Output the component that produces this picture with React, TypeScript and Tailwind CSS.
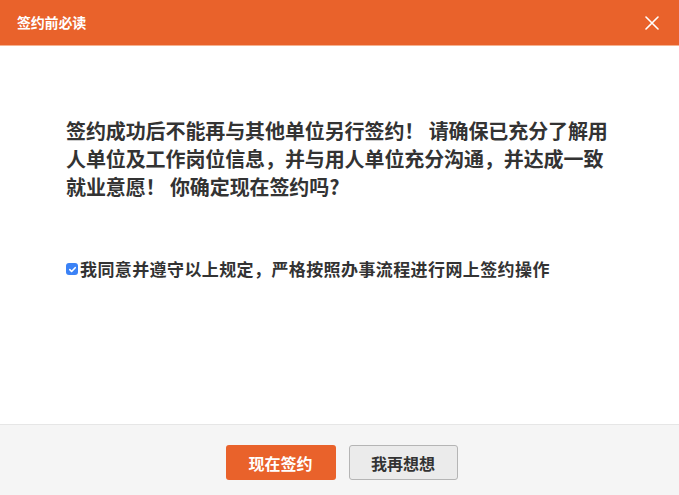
import { useState } from "react";

export default function App() {
  const [agreed, setAgreed] = useState(true);

  return (
    <div
      className="w-[679px] h-[495px] flex flex-col bg-white overflow-hidden"
      style={{ fontFamily: '"Noto Sans CJK SC", "Noto Sans", sans-serif' }}
    >
      {/* header */}
      <div className="h-[46px] shrink-0 bg-[#e9622b] border-b border-[#f5b290] flex items-center justify-between pl-[17px] pr-[16px]">
        <span className="text-white text-[14px] font-bold tracking-[-0.2px]">签约前必读</span>
        <button className="w-[22px] h-[22px] flex items-center justify-center">
          <svg width="14" height="14" viewBox="0 0 14 14" fill="none" stroke="#fff" strokeWidth="1.6" strokeLinecap="round">
            <path d="M1 1l12 12M13 1L1 13" />
          </svg>
        </button>
      </div>

      {/* body */}
      <div className="flex-1 pt-[71px] pl-[66px] pr-[50px]">
        <p className="w-[556px] text-[20px] leading-[28px] font-bold text-[#333] tracking-[-0.1px]">
          签约成功后不能再与其他单位另行签约！ 请确保已充分了解用人单位及工作岗位信息，并与用人单位充分沟通，并达成一致就业意愿！ 你确定现在签约吗?
        </p>
        <label className="mt-[57px] flex items-center text-[17px] leading-[22px] font-bold text-[#333] tracking-[0.4px]">
          <span
            onClick={() => setAgreed(!agreed)}
            className={`w-[12px] h-[12px] mr-[2px] rounded-[3px] flex items-center justify-center ${agreed ? "bg-[#3b82f6]" : "bg-white border border-gray-400"}`}
          >
            {agreed && (
              <svg width="9" height="9" viewBox="0 0 10 10" fill="none" stroke="#fff" strokeWidth="1.8" strokeLinecap="round" strokeLinejoin="round">
                <path d="M2 5.2l2 2L8 3" />
              </svg>
            )}
          </span>
          我同意并遵守以上规定，严格按照办事流程进行网上签约操作
        </label>
      </div>

      {/* footer */}
      <div className="h-[71px] shrink-0 bg-[#f5f5f5] border-t border-[#e6e6e6] flex justify-center gap-[13px] pt-[20px] pl-[4px]">
        <button className="w-[110px] h-[35px] rounded-[3px] bg-[#e9622b] text-white text-[16px] font-bold">
          现在签约
        </button>
        <button className="w-[109px] h-[35px] rounded-[3px] bg-[#ebebeb] border border-[#b5b5b5] text-[#333] text-[16px] font-bold">
          我再想想
        </button>
      </div>
    </div>
  );
}
